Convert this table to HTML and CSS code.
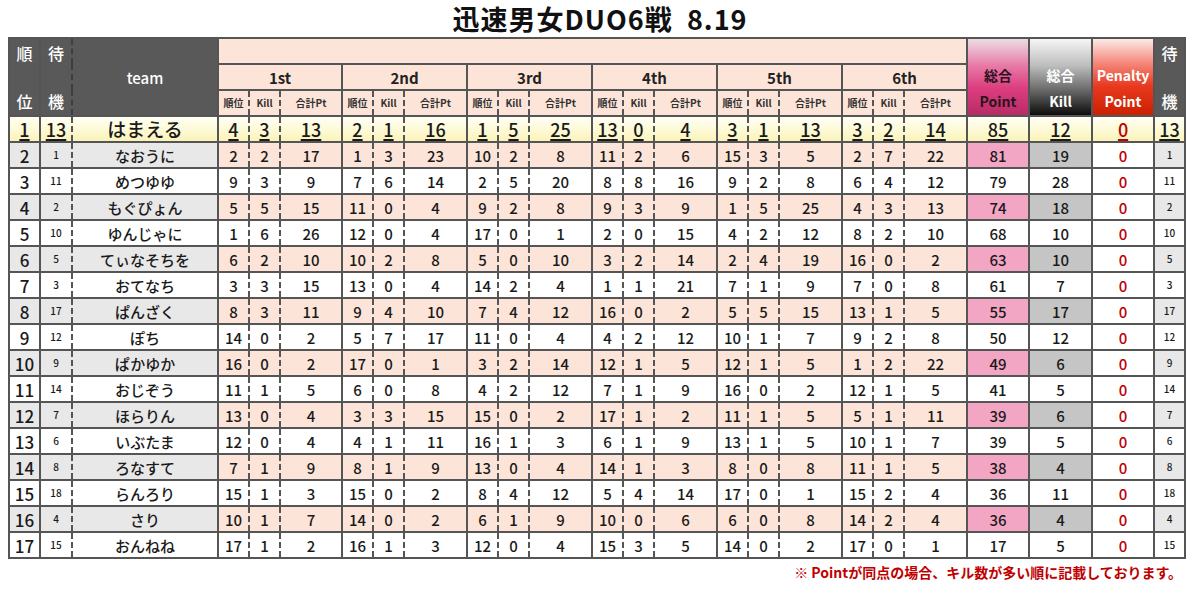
FILE: index.html
```html
<!DOCTYPE html>
<html lang="ja">
<head>
<meta charset="utf-8">
<title>迅速男女DUO6戦 8.19</title>
<link rel="stylesheet" href="styles.css">
</head>
<body>
<div class="title">迅速男女DUO6戦&nbsp;&nbsp;8.19</div>
<table class="board">
<colgroup>
<col class="c-r"><col class="c-w"><col class="c-t">
<col class="c-a"><col class="c-k"><col class="c-p1">
<col class="c-a"><col class="c-k"><col class="c-p">
<col class="c-a"><col class="c-k"><col class="c-p">
<col class="c-a"><col class="c-k"><col class="c-p">
<col class="c-a"><col class="c-k"><col class="c-p">
<col class="c-a"><col class="c-k"><col class="c-p">
<col class="c-tp"><col class="c-tk"><col class="c-pe"><col class="c-w2">
</colgroup>
<thead>
<tr class="h1">
<td class="hd r" rowspan="3"><div class="two"><span>順</span><span>位</span></div></td>
<td class="hd w" rowspan="3"><div class="two"><span>待</span><span>機</span></div></td>
<td class="hd t" rowspan="3">team</td>
<td class="hp" colspan="18"></td>
<td class="gp" rowspan="3"><div class="lo"><span>総合</span><span>Point</span></div></td>
<td class="gk" rowspan="3"><div class="lo"><span>総合</span><span>Kill</span></div></td>
<td class="gr" rowspan="3"><div class="lo"><span>Penalty</span><span>Point</span></div></td>
<td class="hd w2" rowspan="3"><div class="two"><span>待</span><span>機</span></div></td>
</tr>
<tr class="h2">
<td class="hp g" colspan="3">1st</td>
<td class="hp g" colspan="3">2nd</td>
<td class="hp g" colspan="3">3rd</td>
<td class="hp g" colspan="3">4th</td>
<td class="hp g" colspan="3">5th</td>
<td class="hp g" colspan="3">6th</td>
</tr>
<tr class="h3">
<td class="a">順位</td><td class="k">Kill</td><td class="p">合計Pt</td>
<td class="a">順位</td><td class="k">Kill</td><td class="p">合計Pt</td>
<td class="a">順位</td><td class="k">Kill</td><td class="p">合計Pt</td>
<td class="a">順位</td><td class="k">Kill</td><td class="p">合計Pt</td>
<td class="a">順位</td><td class="k">Kill</td><td class="p">合計Pt</td>
<td class="a">順位</td><td class="k">Kill</td><td class="p">合計Pt</td>
</tr>
</thead>
<tbody>
<tr class="top"><td class="r"><u>1</u></td><td class="w"><u>13</u></td><td class="t">はまえる</td><td class="a"><u>4</u></td><td class="k"><u>3</u></td><td class="p"><u>13</u></td><td class="a"><u>2</u></td><td class="k"><u>1</u></td><td class="p"><u>16</u></td><td class="a"><u>1</u></td><td class="k"><u>5</u></td><td class="p"><u>25</u></td><td class="a"><u>13</u></td><td class="k"><u>0</u></td><td class="p"><u>4</u></td><td class="a"><u>3</u></td><td class="k"><u>1</u></td><td class="p"><u>13</u></td><td class="a"><u>3</u></td><td class="k"><u>2</u></td><td class="p"><u>14</u></td><td class="tp"><u>85</u></td><td class="tk"><u>12</u></td><td class="pe"><u>0</u></td><td class="w2"><u>13</u></td></tr>
<tr class="ev"><td class="r">2</td><td class="w">1</td><td class="t">なおうに</td><td class="a">2</td><td class="k">2</td><td class="p">17</td><td class="a">1</td><td class="k">3</td><td class="p">23</td><td class="a">10</td><td class="k">2</td><td class="p">8</td><td class="a">11</td><td class="k">2</td><td class="p">6</td><td class="a">15</td><td class="k">3</td><td class="p">5</td><td class="a">2</td><td class="k">7</td><td class="p">22</td><td class="tp">81</td><td class="tk">19</td><td class="pe">0</td><td class="w2">1</td></tr>
<tr><td class="r">3</td><td class="w">11</td><td class="t">めつゆゆ</td><td class="a">9</td><td class="k">3</td><td class="p">9</td><td class="a">7</td><td class="k">6</td><td class="p">14</td><td class="a">2</td><td class="k">5</td><td class="p">20</td><td class="a">8</td><td class="k">8</td><td class="p">16</td><td class="a">9</td><td class="k">2</td><td class="p">8</td><td class="a">6</td><td class="k">4</td><td class="p">12</td><td class="tp">79</td><td class="tk">28</td><td class="pe">0</td><td class="w2">11</td></tr>
<tr class="ev"><td class="r">4</td><td class="w">2</td><td class="t">もぐぴょん</td><td class="a">5</td><td class="k">5</td><td class="p">15</td><td class="a">11</td><td class="k">0</td><td class="p">4</td><td class="a">9</td><td class="k">2</td><td class="p">8</td><td class="a">9</td><td class="k">3</td><td class="p">9</td><td class="a">1</td><td class="k">5</td><td class="p">25</td><td class="a">4</td><td class="k">3</td><td class="p">13</td><td class="tp">74</td><td class="tk">18</td><td class="pe">0</td><td class="w2">2</td></tr>
<tr><td class="r">5</td><td class="w">10</td><td class="t">ゆんじゃに</td><td class="a">1</td><td class="k">6</td><td class="p">26</td><td class="a">12</td><td class="k">0</td><td class="p">4</td><td class="a">17</td><td class="k">0</td><td class="p">1</td><td class="a">2</td><td class="k">0</td><td class="p">15</td><td class="a">4</td><td class="k">2</td><td class="p">12</td><td class="a">8</td><td class="k">2</td><td class="p">10</td><td class="tp">68</td><td class="tk">10</td><td class="pe">0</td><td class="w2">10</td></tr>
<tr class="ev"><td class="r">6</td><td class="w">5</td><td class="t">てぃなそちを</td><td class="a">6</td><td class="k">2</td><td class="p">10</td><td class="a">10</td><td class="k">2</td><td class="p">8</td><td class="a">5</td><td class="k">0</td><td class="p">10</td><td class="a">3</td><td class="k">2</td><td class="p">14</td><td class="a">2</td><td class="k">4</td><td class="p">19</td><td class="a">16</td><td class="k">0</td><td class="p">2</td><td class="tp">63</td><td class="tk">10</td><td class="pe">0</td><td class="w2">5</td></tr>
<tr><td class="r">7</td><td class="w">3</td><td class="t">おてなち</td><td class="a">3</td><td class="k">3</td><td class="p">15</td><td class="a">13</td><td class="k">0</td><td class="p">4</td><td class="a">14</td><td class="k">2</td><td class="p">4</td><td class="a">1</td><td class="k">1</td><td class="p">21</td><td class="a">7</td><td class="k">1</td><td class="p">9</td><td class="a">7</td><td class="k">0</td><td class="p">8</td><td class="tp">61</td><td class="tk">7</td><td class="pe">0</td><td class="w2">3</td></tr>
<tr class="ev"><td class="r">8</td><td class="w">17</td><td class="t">ぱんざく</td><td class="a">8</td><td class="k">3</td><td class="p">11</td><td class="a">9</td><td class="k">4</td><td class="p">10</td><td class="a">7</td><td class="k">4</td><td class="p">12</td><td class="a">16</td><td class="k">0</td><td class="p">2</td><td class="a">5</td><td class="k">5</td><td class="p">15</td><td class="a">13</td><td class="k">1</td><td class="p">5</td><td class="tp">55</td><td class="tk">17</td><td class="pe">0</td><td class="w2">17</td></tr>
<tr><td class="r">9</td><td class="w">12</td><td class="t">ぽち</td><td class="a">14</td><td class="k">0</td><td class="p">2</td><td class="a">5</td><td class="k">7</td><td class="p">17</td><td class="a">11</td><td class="k">0</td><td class="p">4</td><td class="a">4</td><td class="k">2</td><td class="p">12</td><td class="a">10</td><td class="k">1</td><td class="p">7</td><td class="a">9</td><td class="k">2</td><td class="p">8</td><td class="tp">50</td><td class="tk">12</td><td class="pe">0</td><td class="w2">12</td></tr>
<tr class="ev"><td class="r">10</td><td class="w">9</td><td class="t">ぱかゆか</td><td class="a">16</td><td class="k">0</td><td class="p">2</td><td class="a">17</td><td class="k">0</td><td class="p">1</td><td class="a">3</td><td class="k">2</td><td class="p">14</td><td class="a">12</td><td class="k">1</td><td class="p">5</td><td class="a">12</td><td class="k">1</td><td class="p">5</td><td class="a">1</td><td class="k">2</td><td class="p">22</td><td class="tp">49</td><td class="tk">6</td><td class="pe">0</td><td class="w2">9</td></tr>
<tr><td class="r">11</td><td class="w">14</td><td class="t">おじぞう</td><td class="a">11</td><td class="k">1</td><td class="p">5</td><td class="a">6</td><td class="k">0</td><td class="p">8</td><td class="a">4</td><td class="k">2</td><td class="p">12</td><td class="a">7</td><td class="k">1</td><td class="p">9</td><td class="a">16</td><td class="k">0</td><td class="p">2</td><td class="a">12</td><td class="k">1</td><td class="p">5</td><td class="tp">41</td><td class="tk">5</td><td class="pe">0</td><td class="w2">14</td></tr>
<tr class="ev"><td class="r">12</td><td class="w">7</td><td class="t">ほらりん</td><td class="a">13</td><td class="k">0</td><td class="p">4</td><td class="a">3</td><td class="k">3</td><td class="p">15</td><td class="a">15</td><td class="k">0</td><td class="p">2</td><td class="a">17</td><td class="k">1</td><td class="p">2</td><td class="a">11</td><td class="k">1</td><td class="p">5</td><td class="a">5</td><td class="k">1</td><td class="p">11</td><td class="tp">39</td><td class="tk">6</td><td class="pe">0</td><td class="w2">7</td></tr>
<tr><td class="r">13</td><td class="w">6</td><td class="t">いぶたま</td><td class="a">12</td><td class="k">0</td><td class="p">4</td><td class="a">4</td><td class="k">1</td><td class="p">11</td><td class="a">16</td><td class="k">1</td><td class="p">3</td><td class="a">6</td><td class="k">1</td><td class="p">9</td><td class="a">13</td><td class="k">1</td><td class="p">5</td><td class="a">10</td><td class="k">1</td><td class="p">7</td><td class="tp">39</td><td class="tk">5</td><td class="pe">0</td><td class="w2">6</td></tr>
<tr class="ev"><td class="r">14</td><td class="w">8</td><td class="t">ろなすて</td><td class="a">7</td><td class="k">1</td><td class="p">9</td><td class="a">8</td><td class="k">1</td><td class="p">9</td><td class="a">13</td><td class="k">0</td><td class="p">4</td><td class="a">14</td><td class="k">1</td><td class="p">3</td><td class="a">8</td><td class="k">0</td><td class="p">8</td><td class="a">11</td><td class="k">1</td><td class="p">5</td><td class="tp">38</td><td class="tk">4</td><td class="pe">0</td><td class="w2">8</td></tr>
<tr><td class="r">15</td><td class="w">18</td><td class="t">らんろり</td><td class="a">15</td><td class="k">1</td><td class="p">3</td><td class="a">15</td><td class="k">0</td><td class="p">2</td><td class="a">8</td><td class="k">4</td><td class="p">12</td><td class="a">5</td><td class="k">4</td><td class="p">14</td><td class="a">17</td><td class="k">0</td><td class="p">1</td><td class="a">15</td><td class="k">2</td><td class="p">4</td><td class="tp">36</td><td class="tk">11</td><td class="pe">0</td><td class="w2">18</td></tr>
<tr class="ev"><td class="r">16</td><td class="w">4</td><td class="t">さり</td><td class="a">10</td><td class="k">1</td><td class="p">7</td><td class="a">14</td><td class="k">0</td><td class="p">2</td><td class="a">6</td><td class="k">1</td><td class="p">9</td><td class="a">10</td><td class="k">0</td><td class="p">6</td><td class="a">6</td><td class="k">0</td><td class="p">8</td><td class="a">14</td><td class="k">2</td><td class="p">4</td><td class="tp">36</td><td class="tk">4</td><td class="pe">0</td><td class="w2">4</td></tr>
<tr><td class="r">17</td><td class="w">15</td><td class="t">おんねね</td><td class="a">17</td><td class="k">1</td><td class="p">2</td><td class="a">16</td><td class="k">1</td><td class="p">3</td><td class="a">12</td><td class="k">0</td><td class="p">4</td><td class="a">15</td><td class="k">3</td><td class="p">5</td><td class="a">14</td><td class="k">0</td><td class="p">2</td><td class="a">17</td><td class="k">0</td><td class="p">1</td><td class="tp">17</td><td class="tk">5</td><td class="pe">0</td><td class="w2">15</td></tr>
</tbody>
</table>
<div class="note">※ Pointが同点の場合、キル数が多い順に記載しております。</div>
</body>
</html>
```
FILE: styles.css
```css
html, body {
  background: #ffffff;
}
body {
  margin: 0 8px;
  font-family: "Noto Sans CJK JP", "Noto Sans", sans-serif;
  color: #1a1a1a;
}
.title {
  height: 37px;
  line-height: 37px;
  text-align: center;
  font-size: 27px;
  font-weight: 700;
  color: #111;
  letter-spacing: 1px;
}
.board {
  width: 1176px;
  table-layout: fixed;
  border-collapse: collapse;
  border: 2px solid #555;
}
.c-r { width: 31px; }
.c-w { width: 32px; }
.c-t { width: 146px; }
.c-a { width: 31px; }
.c-k { width: 31px; }
.c-p1 { width: 62px; }
.c-p { width: 63px; }
.c-tp { width: 62px; }
.c-tk { width: 63px; }
.c-pe { width: 62px; }
.c-w2 { width: 31px; }

.board td {
  border: 2px solid #555;
  padding: 0;
  text-align: center;
  vertical-align: middle;
  white-space: nowrap;
  font-size: 15px;
  font-weight: 500;
  line-height: 1;
}
.board td.a { border-right-style: dashed; }
.board td.k { border-left-style: dashed; border-right-style: dashed; }
.board td.p { border-left-style: dashed; }
.board td.w { border-right-style: dashed; }
.board td.t { border-left-style: dashed; }

/* header */
.h1 { height: 26px; }
.h2 { height: 26px; }
.h3 { height: 26px; }
.board td.hd {
  background: #595959;
  color: #fff;
  font-size: 15px;
  font-weight: 500;
}
.board td.hd.w { border-right-color: #3e3e3e; }
.board td.hd.t { border-left-color: #3e3e3e; }
.two {
  height: 76px;
  display: flex;
  flex-direction: column;
  justify-content: space-between;
  align-items: center;
  padding: 2px 0 2px;
  box-sizing: border-box;
  font-size: 16px;
  line-height: 24px;
}
.board td.hp {
  background: #fde4d8;
}
.board td.hp.g {
  font-size: 15px;
  font-weight: 700;
  color: #222;
}
.h3 td {
  background: #fde4d8;
  font-size: 10px !important;
  font-weight: 700 !important;
  color: #333;
}
.lo {
  height: 76px;
  display: flex;
  flex-direction: column;
  justify-content: flex-end;
  align-items: center;
  padding-bottom: 1px;
  box-sizing: border-box;
}
.lo span {
  height: 26px;
  line-height: 26px;
  font-size: 14px;
  font-weight: 700;
}
.board td.gp {
  background: linear-gradient(to bottom, #ecdde3 0%, #e77aa6 35%, #dc3d7e 65%, #b82c66 100%);
  color: #2a1420;
}
.board td.gk {
  background: linear-gradient(to bottom, #f6f6f6 0%, #bdbdbd 35%, #6f6f6f 65%, #0c0c0c 100%);
  color: #fff;
}
.board td.gr {
  background: linear-gradient(to bottom, #fdeae8 0%, #f58c80 30%, #e8391f 62%, #cc2000 100%);
  color: #fff;
}

/* body rows */
tbody tr { height: 26px; }
.board td.r { font-size: 17px; }
.board td.w, .board td.w2 { font-size: 10px; }
.board td.t { font-size: 15px; }
.board td.pe { color: #c00000; }

tr.ev td.r, tr.ev td.w, tr.ev td.t, tr.ev td.w2 { background: #e8e8e8; }
tr.ev td.a, tr.ev td.k, tr.ev td.p { background: #fde4d8; }
tr.ev td.tp { background: #f3a6c4; }
tr.ev td.tk { background: #c5c5c5; }

tr.top td {
  background: linear-gradient(to bottom, #fffff4 0%, #fdf9d6 55%, #fbf3b9 100%);
  font-size: 18px !important;
  font-weight: 500;
  line-height: 22px;
}
tr.top td.t {
  font-size: 19px !important;
}
tr.top u {
  text-decoration: underline;
  text-decoration-thickness: 1.5px;
  text-underline-offset: 2px;
}

.note {
  margin-top: 3px;
  text-align: right;
  padding-right: 10px;
  font-size: 14px;
  font-weight: 700;
  color: #c00000;
  line-height: 20px;
}
```
